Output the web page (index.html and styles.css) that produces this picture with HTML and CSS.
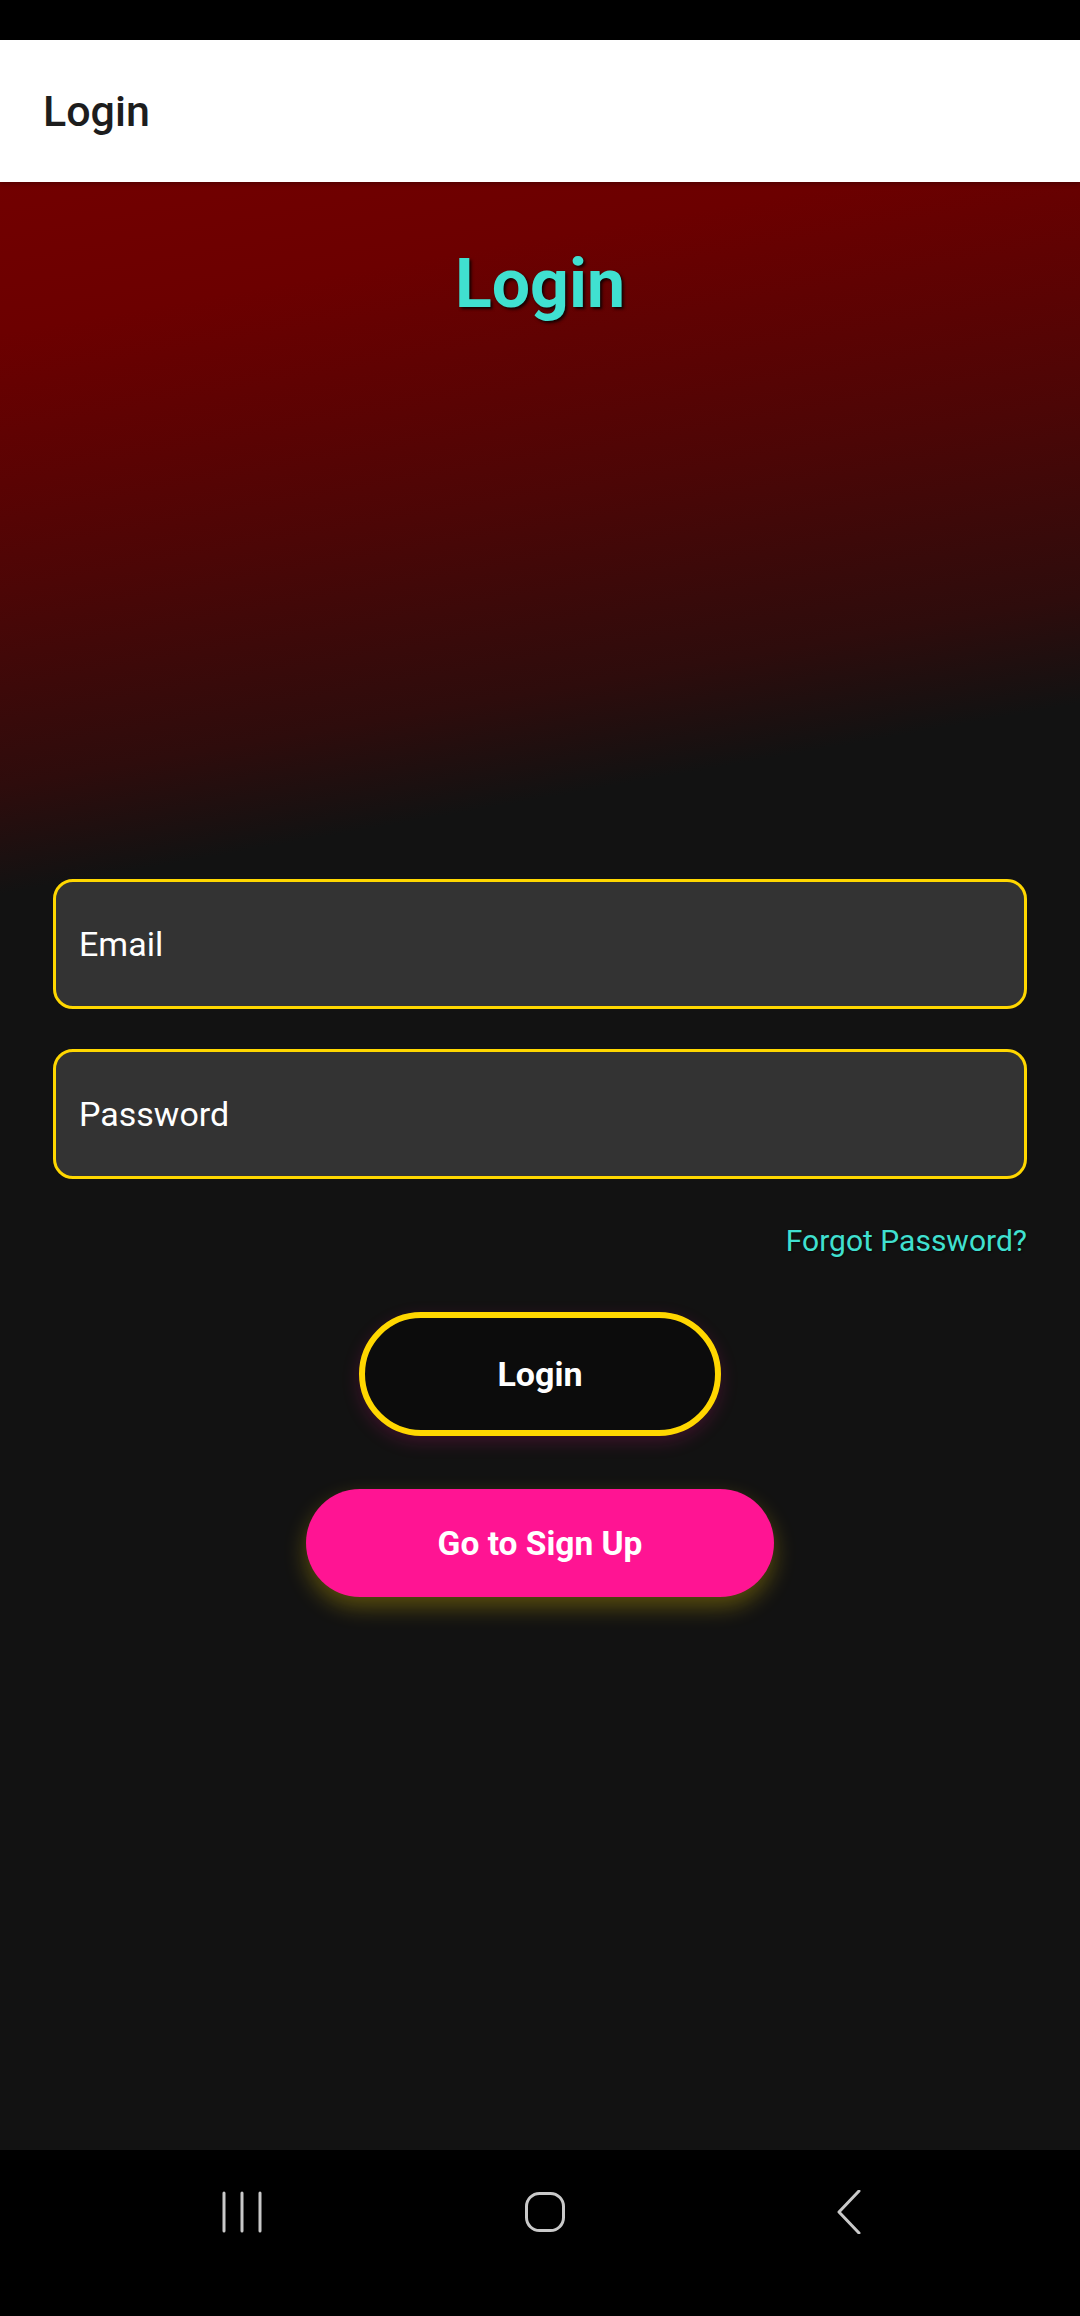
FILE: index.html
```html
<!DOCTYPE html>
<html lang="en">
<head>
<meta charset="utf-8">
<title>Login</title>
<link rel="stylesheet" href="styles.css">
</head>
<body>
<div class="screen">
  <div class="status"></div>
  <header class="appbar"><span class="appbar-title">Login</span></header>
  <main class="content">
    <h1 class="title">Login</h1>
    <div class="form">
      <div class="field"><span class="placeholder">Email</span></div>
      <div class="field"><span class="placeholder">Password</span></div>
    </div>
    <div class="forgot">Forgot Password?</div>
    <div class="btn btn-login">Login</div>
    <div class="btn btn-signup">Go to Sign Up</div>
  </main>
  <nav class="navbar">
    <div class="nav-icon">
      <svg width="44" height="44" viewBox="0 0 44 44"><g stroke="#c9c9c9" stroke-width="3" stroke-linecap="round"><line x1="4" y1="3" x2="4" y2="41"/><line x1="22" y1="3" x2="22" y2="41"/><line x1="40" y1="3" x2="40" y2="41"/></g></svg>
    </div>
    <div class="nav-icon">
      <svg width="44" height="44" viewBox="0 0 44 44"><rect x="3.5" y="3.5" width="37" height="37" rx="13" fill="none" stroke="#c9c9c9" stroke-width="3"/></svg>
    </div>
    <div class="nav-icon">
      <svg width="44" height="44" viewBox="0 0 44 44"><polyline points="33,1 13,22 33,43" fill="none" stroke="#c9c9c9" stroke-width="3" stroke-linecap="round" stroke-linejoin="round"/></svg>
    </div>
  </nav>
</div>
</body>
</html>
```

FILE: styles.css
```css
* { box-sizing: border-box; }
html, body { margin: 0; padding: 0; background: #000; }
body { font-family: Roboto, "Noto Sans", "Liberation Sans", sans-serif; }
.screen { width: 1080px; height: 2316px; display: flex; flex-direction: column; overflow: hidden; }
.status { height: 40px; background: #000; flex: none; }
.appbar { height: 142px; flex: none; background: #fff; display: flex; align-items: center; padding-left: 43px; position: relative; z-index: 2; box-shadow: 0 2px 4px rgba(0,0,0,0.25); }
.appbar-title { font-size: 43px; font-weight: 500; color: #1d1d1d; }
.content { height: 1968px; flex: none; display: flex; flex-direction: column; padding: 0 53px; background: linear-gradient(170deg, #720000 0%, #6c0000 7%, #5a0303 14%, #4c0606 19%, #2e0c0c 28%, #121212 33%, #121212 100%); }
.title { margin: 62px 0 0; font-size: 68px; line-height: 80px; font-weight: 700; text-align: center; color: #40e0d0; text-shadow: 2px 2px 3px rgba(0,0,0,0.8); }
.form { margin-top: 555px; display: flex; flex-direction: column; gap: 40px; }
.field { height: 130px; border: 3px solid #ffd700; border-radius: 20px; background: #333333; display: flex; align-items: center; padding-left: 23px; }
.placeholder { font-size: 34px; color: #fff; }
.forgot { margin-top: 44px; font-size: 30px; line-height: 36px; text-align: right; color: #40e0d0; text-shadow: 1px 1px 2px rgba(0,0,0,0.6); }
.btn { align-self: center; display: flex; align-items: center; justify-content: center; color: #fff; font-weight: 700; border-radius: 999px; }
.btn-login { margin-top: 53px; width: 362px; height: 124px; border: 6px solid #ffd700; background: #0c0c0c; font-size: 34px; box-shadow: 0 6px 18px rgba(255,20,147,0.18); }
.btn-signup { margin-top: 53px; width: 468px; height: 108px; background: #ff1493; font-size: 33.5px; box-shadow: 0 10px 22px rgba(255,215,0,0.3); }
.navbar { flex: 1; background: #000; display: flex; justify-content: center; gap: 259px; padding-top: 40px; padding-left: 9px; }
.nav-icon { width: 44px; height: 44px; display: flex; }
```
